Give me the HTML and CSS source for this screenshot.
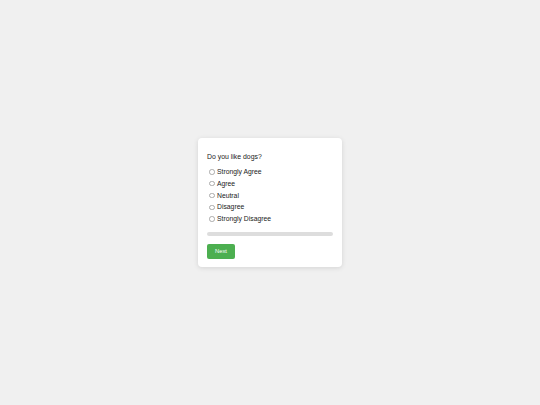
FILE: index.html
```html
<!DOCTYPE html>
<html lang="en">
<head>
	<meta charset="UTF-8">
	<title>Survey</title>
	<link rel="stylesheet" href="styles.css">
</head>
<body>
	<div class="page">
		<div class="card">
			<p class="question">Do you like dogs?</p>
			<div class="options">
				<label class="option"><input type="radio" name="answer"> Strongly Agree</label>
				<label class="option"><input type="radio" name="answer"> Agree</label>
				<label class="option"><input type="radio" name="answer"> Neutral</label>
				<label class="option"><input type="radio" name="answer"> Disagree</label>
				<label class="option"><input type="radio" name="answer"> Strongly Disagree</label>
			</div>
			<div class="progress"><div class="fill" style="width: 0%"></div></div>
			<button class="next">Next</button>
		</div>
	</div>
</body>
</html>
```

FILE: styles.css
```css
* { margin: 0; padding: 0; box-sizing: border-box; }
body {
	background: #f0f0f0;
	font-family: "Liberation Sans", Arial, sans-serif;
	color: #1a1a1a;
}
.page {
	height: 405px;
	display: flex;
	align-items: center;
	justify-content: center;
}
.card {
	width: 144px;
	background: #fff;
	border-radius: 4px;
	box-shadow: 0 1px 5px rgba(0,0,0,.12);
	padding: 14px 9px 8px;
}
.question {
	font-size: 6.9px;
	line-height: 10px;
	margin-bottom: 4px;
}
.options {
	display: flex;
	flex-direction: column;
}
.option {
	display: flex;
	align-items: center;
	gap: 2.5px;
	font-size: 6.8px;
	line-height: 11.8px;
	padding-left: 2px;
}
.option input {
	appearance: none;
	width: 5.5px;
	height: 5.5px;
	border: 0.6px solid #aaa;
	border-radius: 50%;
	background: #fff;
}
.progress {
	height: 4px;
	background: #ddd;
	border-radius: 2px;
	margin: 7px 0 8px;
}
.progress .fill {
	height: 100%;
	background: #4caf50;
	border-radius: 2px;
}
.next {
	display: block;
	width: 28px;
	height: 15px;
	background: #4caf50;
	color: #fff;
	border: none;
	border-radius: 2px;
	font: 5.8px "Liberation Sans", Arial, sans-serif;
}
```
